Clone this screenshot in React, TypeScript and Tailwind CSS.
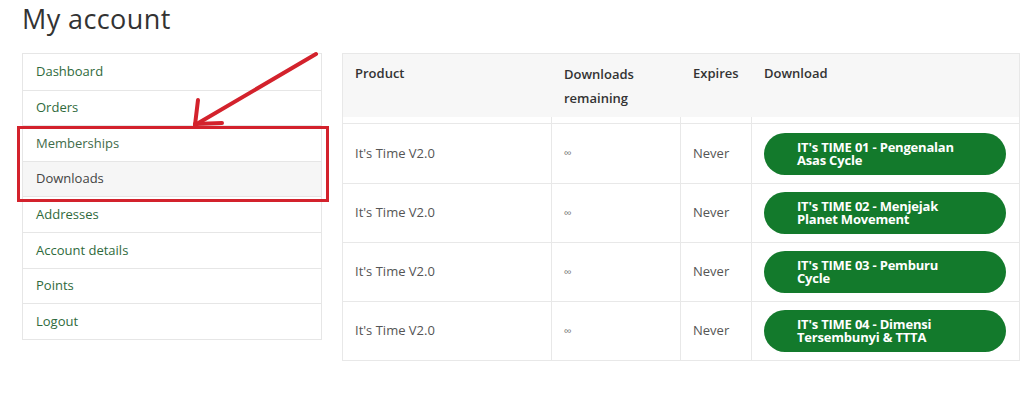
const navItems = [
  "Dashboard",
  "Orders",
  "Memberships",
  "Downloads",
  "Addresses",
  "Account details",
  "Points",
  "Logout",
];

const downloads = [
  "IT's TIME 01 - Pengenalan Asas Cycle",
  "IT's TIME 02 - Menjejak Planet Movement",
  "IT's TIME 03 - Pemburu Cycle",
  "IT's TIME 04 - Dimensi Tersembunyi & TTTA",
];

function Arrow() {
  return (
    <svg
      className="absolute left-0 top-0 pointer-events-none"
      width="340"
      height="210"
      viewBox="0 0 340 210"
    >
      <g stroke="#d3222c" strokeWidth="4" strokeLinecap="round" fill="none">
        <line x1="316" y1="54" x2="195" y2="125" />
        <line x1="198" y1="100" x2="195" y2="125" />
        <line x1="195" y1="124" x2="222" y2="123" />
      </g>
      <rect x="18.5" y="127.5" width="309" height="73" fill="none" stroke="#d3222c" strokeWidth="3" />
    </svg>
  );
}

export default function App() {
  return (
    <div
      className="relative w-[1024px] h-[417px] bg-white overflow-hidden text-[#333]"
      style={{ fontFamily: '"Open Sans", "Liberation Sans", sans-serif' }}
    >
      <h1 className="pl-[22px] pt-[2px] text-[27px] leading-[34px] text-[#333] tracking-[0.4px]">
        My account
      </h1>

      <div className="flex items-start gap-[20px] pl-[22px] mt-[17px]">
        <nav className="w-[300px] border border-[#e6e6e6]">
          {navItems.map((item, i) => (
            <div
              key={item}
              className={
                "h-[35.6px] flex items-center pl-[13px] text-[13px] " +
                (i > 0 ? "border-t border-[#e6e6e6] " : "") +
                (item === "Downloads"
                  ? "bg-[#f6f6f6] text-[#444]"
                  : item === "Memberships"
                  ? "text-[#3f6b4a]"
                  : "text-[#2f6a3c]")
              }
            >
              {item}
            </div>
          ))}
        </nav>

        <div className="w-[678px] border border-[#e8e8e8] text-[13px]">
          <div className="flex h-[63px] bg-[#f7f7f7] font-semibold text-[#333]">
            <div className="w-[209px] pl-[12px] pt-[10px]">Product</div>
            <div className="w-[129px] pl-[12px] pt-[8px] leading-[24px]">
              Downloads
              <br />
              remaining
            </div>
            <div className="w-[71px] pl-[12px] pt-[10px]">Expires</div>
            <div className="flex-1 pl-[12px] pt-[10px]">Download</div>
          </div>
          <div className="flex h-[7px] border-b border-[#e8e8e8]">
            <div className="w-[209px] border-r border-[#e8e8e8]" />
            <div className="w-[129px] border-r border-[#e8e8e8]" />
            <div className="w-[71px] border-r border-[#e8e8e8]" />
          </div>
          {downloads.map((d, i) => (
            <div
              key={d}
              className={
                "flex h-[59px] items-center text-[#555] " +
                (i > 0 ? "border-t border-[#e8e8e8]" : "")
              }
            >
              <div className="w-[209px] h-full flex items-center pl-[12px] border-r border-[#e8e8e8]">
                It's Time V2.0
              </div>
              <div className="w-[129px] h-full flex items-center pl-[12px] border-r border-[#e8e8e8] text-[11px] text-[#777]">
                ∞
              </div>
              <div className="w-[71px] h-full flex items-center pl-[12px] border-r border-[#e8e8e8]">
                Never
              </div>
              <div className="flex-1 h-full flex items-center pl-[12px] pr-[13px]">
                <a className="w-full h-[42px] rounded-full bg-[#137a2c] text-white font-bold text-[13px] leading-[13px] tracking-[-0.2px] pl-[33px] flex items-center">
                  <span className="max-w-[172px]">{d}</span>
                </a>
              </div>
            </div>
          ))}
        </div>
      </div>

      <Arrow />
    </div>
  );
}
